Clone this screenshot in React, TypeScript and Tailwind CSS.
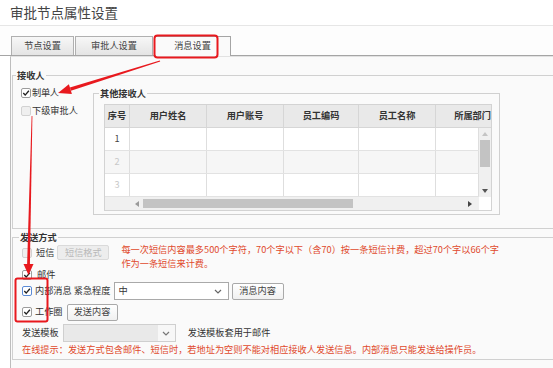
import React from 'react';

const Box = ({ checked, disabled, focus }: { checked?: boolean; disabled?: boolean; focus?: boolean }) => (
  <span
    className={`flex h-[10px] w-[10px] shrink-0 items-center justify-center rounded-[2px] border ${
      focus ? 'border-[#5b8bd6] bg-white' : disabled ? 'border-[#d2d2d2] bg-[#efefef]' : 'border-[#9c9c9c] bg-white'
    }`}
  >
    {checked && (
      <svg viewBox="0 0 10 10" className="h-[8px] w-[8px]">
        <path d="M1.6 5.1 L4 7.6 L8.6 2.2" stroke="#222" strokeWidth="1.7" fill="none" />
      </svg>
    )}
  </span>
);

const Btn = ({ children, disabled, className = '' }: { children: React.ReactNode; disabled?: boolean; className?: string }) => (
  <span
    className={`flex items-center justify-center rounded-[2px] border leading-none ${
      disabled ? 'border-[#dadada] bg-[#ededed] text-[#b8b8b8]' : 'border-[#a9a9a9] bg-gradient-to-b from-white to-[#f0f0f0] text-[#444]'
    } ${className}`}
  >
    {children}
  </span>
);

const Chevron = ({ color = '#666' }: { color?: string }) => (
  <svg viewBox="0 0 8 5" className="h-[5px] w-[8px]">
    <path d="M1 1 L4 4 L7 1" stroke={color} strokeWidth="1.2" fill="none" />
  </svg>
);

const Tri = ({ dir, color }: { dir: 'up' | 'down' | 'left' | 'right'; color: string }) => {
  const d = {
    up: 'M0 4 L3 0 L6 4 Z',
    down: 'M0 0 L6 0 L3 4 Z',
    left: 'M4 0 L4 6 L0 3 Z',
    right: 'M0 0 L0 6 L4 3 Z',
  }[dir];
  const size = dir === 'up' || dir === 'down' ? 'h-[4px] w-[6px]' : 'h-[6px] w-[4px]';
  return (
    <svg viewBox={dir === 'up' || dir === 'down' ? '0 0 6 4' : '0 0 4 6'} className={size}>
      <path d={d} fill={color} />
    </svg>
  );
};

const colW = ['w-[25px]', 'w-[77px]', 'w-[77px]', 'w-[75px]', 'w-[77px]'];
const heads = ['序号', '用户姓名', '用户账号', '员工编码', '员工名称'];

function Grid() {
  return (
    <div className="w-[388px] border border-[#d3d3d3] bg-white">
      <div className="flex h-[23px] border-b border-[#d6d6d6] bg-[#e9e9e9] font-semibold text-[#333]">
        {heads.map((h, i) => (
          <div key={h} className={`${colW[i]} flex shrink-0 items-center justify-center border-r border-[#d6d6d6]`}>
            {h}
          </div>
        ))}
        <div className="flex flex-1 items-center justify-end overflow-hidden whitespace-nowrap">所属部门</div>
      </div>
      <div className="flex">
        <div className="flex-1">
          {['1', '2', '3'].map((n, r) => (
            <div key={n} className={`flex h-[23px] border-b border-[#e2e2e2] ${r === 1 ? 'bg-[#f6f6f6]' : 'bg-white'}`}>
              {colW.map((w, i) => (
                <div
                  key={i}
                  className={`${w} flex shrink-0 items-center justify-center border-r border-[#dedede] ${r === 0 ? 'text-[#444]' : 'text-[#c8c8c8]'}`}
                >
                  {i === 0 ? n : ''}
                </div>
              ))}
              <div className="flex-1 border-r border-[#dedede]" />
            </div>
          ))}
        </div>
        <div className="flex w-[12px] flex-col items-center bg-[#f0f0f0]">
          <div className="flex h-[12px] items-center">
            <Tri dir="up" color="#c4c4c4" />
          </div>
          <div className="h-[27px] w-[10px] bg-[#c3c3c3]" />
          <div className="flex-1" />
          <div className="flex h-[12px] items-center">
            <Tri dir="down" color="#555" />
          </div>
        </div>
      </div>
      <div className="flex h-[13px] items-center bg-[#f0f0f0]">
        <div className="flex w-[38px] justify-end pr-[4px]">
          <Tri dir="left" color="#9a9a9a" />
        </div>
        <div className="h-[9px] w-[210px] bg-[#c3c3c3]" />
        <div className="flex flex-1 justify-end pr-[7px]">
          <Tri dir="right" color="#444" />
        </div>
        <div className="h-full w-[12px] bg-white" />
      </div>
    </div>
  );
}

export default function App() {
  return (
    <div className="relative h-[368px] w-[553px] overflow-hidden bg-white font-['Noto_Sans_CJK_SC',sans-serif] text-[9.2px] text-[#333]">
      <div className="h-[26px] border-b border-[#e6e6e6] pl-[10px] text-[13.5px] leading-[24px] text-[#444]">审批节点属性设置</div>

      <div className="flex items-end border-b border-[#a5a5a5] bg-[#fdfdfd] pl-[11px] pt-[10px]">
        <div className="flex h-[19px] w-[63px] items-center justify-center border border-b-0 border-[#b0b0b0] bg-gradient-to-b from-[#f7f7f7] to-[#e4e4e4] text-[#444]">
          节点设置
        </div>
        <div className="ml-[1px] flex h-[19px] w-[78px] items-center justify-center border border-b-0 border-[#b0b0b0] bg-gradient-to-b from-[#f7f7f7] to-[#e4e4e4] text-[#444]">
          审批人设置
        </div>
        <div className="relative -mb-px ml-[1px] flex h-[20px] w-[77px] items-center justify-center border border-b-0 border-[#a5a5a5] bg-[#fafafa] pb-[1px] text-[#444]">
          消息设置
        </div>
      </div>

      <div className="ml-[10px] h-[320px] border-l border-t border-l-[#bdbdbd] border-t-[#e2e2e2] bg-[#fafafa]">
        <fieldset className="ml-[1px] mr-[-40px] mt-[12px] border border-[#d0d0d0] pb-[13px]">
          <legend className="ml-[3px] px-[1px] font-bold leading-[12px] text-[#333]">接收人</legend>
          <div className="flex">
            <div className="flex w-[80px] flex-col gap-[6px] pl-[8px] pt-[6px]">
              <div className="flex h-[12px] items-center">
                <Box checked />
                <span className="ml-[1px] tracking-[-0.3px]">制单人</span>
              </div>
              <div className="flex h-[12px] items-center">
                <Box disabled />
                <span className="ml-[1px]">下级审批人</span>
              </div>
            </div>
            <fieldset className="mt-[6px] w-[407px] border border-[#d0d0d0] pb-[3px] pl-[10px] pr-[6px] pt-[5px]">
              <legend className="-ml-[5px] px-[1px] font-bold leading-[12px] text-[#333]">其他接收人</legend>
              <Grid />
            </fieldset>
          </div>
        </fieldset>

        <fieldset className="ml-[1px] mr-[-40px] mt-[2px] border border-[#d0d0d0] pb-[3px]">
          <legend className="ml-[6px] px-[1px] font-bold leading-[12px] text-[#333]">发送方式</legend>

          <div className="flex h-[25px] items-start pl-[9px]">
            <span className="mt-[5px]">
              <Box disabled />
            </span>
            <span className="ml-[4px] mt-[3px] leading-[12px]">短信</span>
            <Btn disabled className="ml-[3px] mt-[2px] h-[15px] w-[52px]">
              短信格式
            </Btn>
            <div className="-mt-[1px] ml-[12px] whitespace-nowrap leading-[14px] text-[#e0492c]">
              每一次短信内容最多500个字符，70个字以下（含70）按一条短信计费，超过70个字以66个字
              <br />
              作为一条短信来计费。
            </div>
          </div>

          <div className="mt-[1px] flex h-[12px] items-center pl-[9px]">
            <Box checked />
            <span className="ml-[5px]">邮件</span>
          </div>

          <div className="flex h-[20px] items-center pl-[9px]">
            <Box checked focus />
            <span className="ml-[3px]">内部消息</span>
            <span className="ml-[2px]">紧急程度</span>
            <span className="ml-[3px] flex h-[18px] w-[115px] items-center justify-between border border-[#a9a9a9] bg-white pl-[4px] pr-[6px]">
              中
              <Chevron />
            </span>
            <Btn className="ml-[3px] h-[17px] w-[52px]">消息内容</Btn>
          </div>

          <div className="mt-[1px] flex h-[20px] items-center pl-[9px]">
            <Box checked />
            <span className="ml-[3px]">工作圈</span>
            <Btn className="ml-[4px] h-[17px] w-[51px]">发送内容</Btn>
          </div>

          <div className="mt-[1px] flex h-[20px] items-center pl-[9px]">
            <span>发送模板</span>
            <span className="ml-[4px] flex h-[18px] w-[113px] items-center border border-[#cfcfcf] bg-[#e9e9e9]">
              <span className="flex-1" />
              <span className="flex h-full w-[17px] items-center justify-center bg-[#f7f7f7]">
                <Chevron color="#777" />
              </span>
            </span>
            <span className="ml-[12px]">发送模板套用于邮件</span>
          </div>

          <div className="h-[13px] pl-[9px] leading-[13px] text-[#e0492c]">
            在线提示：发送方式包含邮件、短信时，若地址为空则不能对相应接收人发送信息。内部消息只能发送给操作员。
          </div>
        </fieldset>
      </div>

      <svg className="pointer-events-none absolute inset-0" width="553" height="368" viewBox="0 0 553 368">
        <rect x="154.5" y="35.5" width="63" height="22" rx="3" fill="none" stroke="#e8191e" strokeWidth="2" />
        <polygon points="160.2,61.5 159.8,60.5 69.9,87.5 70.9,90.7" fill="#e8191e" />
        <polygon points="58,93 68.9,84.3 71.9,93.9" fill="#e8191e" />
        <polygon points="31.6,116 32.4,116 29.9,265 27.1,265" fill="#e8191e" />
        <polygon points="23.5,264 33.5,264 28.5,275" fill="#e8191e" />
        <rect x="15.5" y="278.5" width="32" height="43" rx="2" fill="none" stroke="#e8191e" strokeWidth="2" />
      </svg>
    </div>
  );
}
